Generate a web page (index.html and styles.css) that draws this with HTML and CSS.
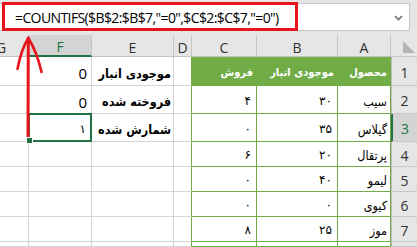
FILE: index.html
```html
<!DOCTYPE html>
<html lang="fa">
<head>
<meta charset="utf-8">
<link rel="stylesheet" href="styles.css">
</head>
<body>
<div class="app">
  <div class="fbar">
    <div class="fbox">
      <span class="ftext">=COUNTIFS($B$2:$B$7,"=0",$C$2:$C$7,"=0")</span>
      <svg class="chev" width="9" height="6" viewBox="0 0 9 6"><path d="M1 1 L4.5 4.5 L8 1" fill="none" stroke="#6a6a6a" stroke-width="1.6"/></svg>
    </div>
  </div>
  <div class="sheet">
    <div class="ch chg"><span class="glbl">G</span></div>
    <div class="ch chsel">F</div>
    <div class="ch">E</div>
    <div class="ch">D</div>
    <div class="ch">C</div>
    <div class="ch">B</div>
    <div class="ch">A</div>
    <div class="ch corner"><span class="tri"></span></div>

    <div class="c"></div>
    <div class="c num">0</div>
    <div class="c lbl">موجودی انبار</div>
    <div class="c d"></div>
    <div class="c hd">فروش</div>
    <div class="c hd">موجودی انبار</div>
    <div class="c hd">محصول</div>
    <div class="rh">1</div>

    <div class="c"></div>
    <div class="c num">0</div>
    <div class="c lbl">فروخته شده</div>
    <div class="c d"></div>
    <div class="c g v">۴</div>
    <div class="c g v">۳۰</div>
    <div class="c g t">سیب</div>
    <div class="rh">2</div>

    <div class="c"></div>
    <div class="c num sel">۱</div>
    <div class="c lbl">شمارش شده</div>
    <div class="c d"></div>
    <div class="c g v">۰</div>
    <div class="c g v">۳۵</div>
    <div class="c g t">گیلاس</div>
    <div class="rh rhsel">3</div>

    <div class="c"></div>
    <div class="c"></div>
    <div class="c"></div>
    <div class="c d"></div>
    <div class="c g v">۶</div>
    <div class="c g v">۲۰</div>
    <div class="c g t">پرتقال</div>
    <div class="rh">4</div>

    <div class="c"></div>
    <div class="c"></div>
    <div class="c"></div>
    <div class="c d"></div>
    <div class="c g v">۰</div>
    <div class="c g v">۴۰</div>
    <div class="c g t">لیمو</div>
    <div class="rh">5</div>

    <div class="c"></div>
    <div class="c"></div>
    <div class="c"></div>
    <div class="c d"></div>
    <div class="c g v">۰</div>
    <div class="c g v">۰</div>
    <div class="c g t">کیوی</div>
    <div class="rh">6</div>

    <div class="c"></div>
    <div class="c"></div>
    <div class="c"></div>
    <div class="c d"></div>
    <div class="c g v">۸</div>
    <div class="c g v">۲۵</div>
    <div class="c g t">موز</div>
    <div class="rh">7</div>

    <div class="c"></div>
    <div class="c"></div>
    <div class="c"></div>
    <div class="c d"></div>
    <div class="c g"></div>
    <div class="c g"></div>
    <div class="c g"></div>
    <div class="rh"></div>
  </div>
  <svg class="annot" width="417" height="247" viewBox="0 0 417 247">
    <rect x="3.5" y="3.5" width="293" height="26" fill="none" stroke="#e8141c" stroke-width="3"/>
    <path d="M28 139 L28.3 38" fill="none" stroke="#e8141c" stroke-width="3" stroke-linecap="round"/>
    <path d="M28.3 38 Q21 50 17.5 69" fill="none" stroke="#e8141c" stroke-width="2.6" stroke-linecap="round"/>
    <path d="M28.3 38 Q37 52 41.5 72" fill="none" stroke="#e8141c" stroke-width="2.6" stroke-linecap="round"/>
  </svg>
</div>
</body>
</html>
```
FILE: styles.css
```css
html, body {
  margin: 0;
  padding: 0;
}
body {
  background: #e6e6e6;
}
.app {
  position: relative;
  width: 417px;
  height: 247px;
  overflow: hidden;
  background: #e6e6e6;
  font-family: "DejaVu Sans Condensed", "DejaVu Sans", sans-serif;
}
.fbar {
  height: 35px;
  padding-top: 3px;
  box-sizing: border-box;
}
.fbox {
  height: 28px;
  width: 410px;
  box-sizing: border-box;
  background: #fff;
  border: 1px solid #c6c6c6;
  border-left: none;
  display: flex;
  align-items: center;
  padding-left: 15px;
  padding-right: 6px;
}
.ftext {
  flex: 1;
  font-family: "Open Sans", sans-serif;
  font-size: 14px;
  letter-spacing: -0.6px;
  color: #000;
  white-space: nowrap;
}
.chev {
  display: block;
  margin-top: 2px;
}
.sheet {
  display: grid;
  grid-template-columns: 29px 63px 82px 18px 65px 81px 53px 26px;
  grid-template-rows: 22px 29px 28px 28px 25px 25px 25px 25px 5px;
  background: #fff;
}
.ch {
  background: #e6e6e6;
  border-right: 1px solid #c4c4c4;
  border-bottom: 1px solid #c4c4c4;
  box-sizing: border-box;
  display: flex;
  align-items: center;
  justify-content: center;
  padding-top: 3px;
  font-family: "Open Sans", sans-serif;
  font-size: 14px;
  color: #333;
}
.chg {
  justify-content: flex-start;
  overflow: hidden;
}
.glbl {
  margin-left: -4px;
}
.chsel {
  background: #d4d4d4;
  color: #217346;
  border-bottom: 2px solid #217346;
}
.corner {
  border-right: none;
  align-items: flex-end;
  justify-content: flex-end;
  padding: 0 2px 3px 0;
}
.tri {
  width: 0;
  height: 0;
  border-left: 12px solid #b4b4b4;
  border-top: 12px solid transparent;
}
.c {
  border-right: 1px solid #d4d4d4;
  border-bottom: 1px solid #d4d4d4;
  box-sizing: border-box;
  display: flex;
  align-items: center;
  justify-content: flex-start;
  white-space: nowrap;
  color: #000;
  font-size: 12px;
  direction: rtl;
}
.num {
  font-family: "Open Sans", sans-serif;
  font-size: 15px;
  padding-top: 4px;
  padding-right: 4px;
}
.lbl {
  font-weight: bold;
  font-size: 12.5px;
  padding-right: 2px;
  padding-top: 4px;
}
.d {
  border-right-color: #70ad47;
}
.hd {
  background: #70ad47;
  border-right-color: #70ad47;
  border-bottom-color: #70ad47;
  color: #fff;
  font-weight: bold;
  font-size: 11px;
  padding-right: 3px;
  padding-top: 3px;
}
.g {
  border-right-color: #70ad47;
  border-bottom-color: #70ad47;
}
.v {
  padding-right: 5px;
  padding-top: 2px;
  font-family: "DejaVu Sans", sans-serif;
  font-size: 12px;
}
.t {
  padding-right: 3px;
  padding-top: 3px;
  font-size: 12.5px;
}
.sel {
  position: relative;
}
.num.sel {
  font-family: "DejaVu Sans", sans-serif;
  font-size: 12px;
  padding-right: 5px;
  padding-top: 3px;
}
.sel::after {
  content: "";
  position: absolute;
  left: -1px;
  top: -1px;
  right: -1px;
  bottom: -1px;
  border: 2px solid #217346;
}
.sel::before {
  content: "";
  position: absolute;
  left: -3px;
  bottom: -3px;
  width: 5px;
  height: 5px;
  background: #217346;
  border: 1px solid #fff;
  z-index: 1;
}
.rh {
  background: #e6e6e6;
  border-left: 1px solid #bdbdbd;
  border-bottom: 1px solid #c8c8c8;
  box-sizing: border-box;
  display: flex;
  align-items: center;
  justify-content: center;
  padding-top: 2px;
  font-family: "Open Sans", sans-serif;
  font-size: 14px;
  color: #333;
}
.rhsel {
  background: #d4d4d4;
  color: #217346;
  border-left: 2px solid #217346;
}
.annot {
  position: absolute;
  left: 0;
  top: 0;
  pointer-events: none;
}
```
